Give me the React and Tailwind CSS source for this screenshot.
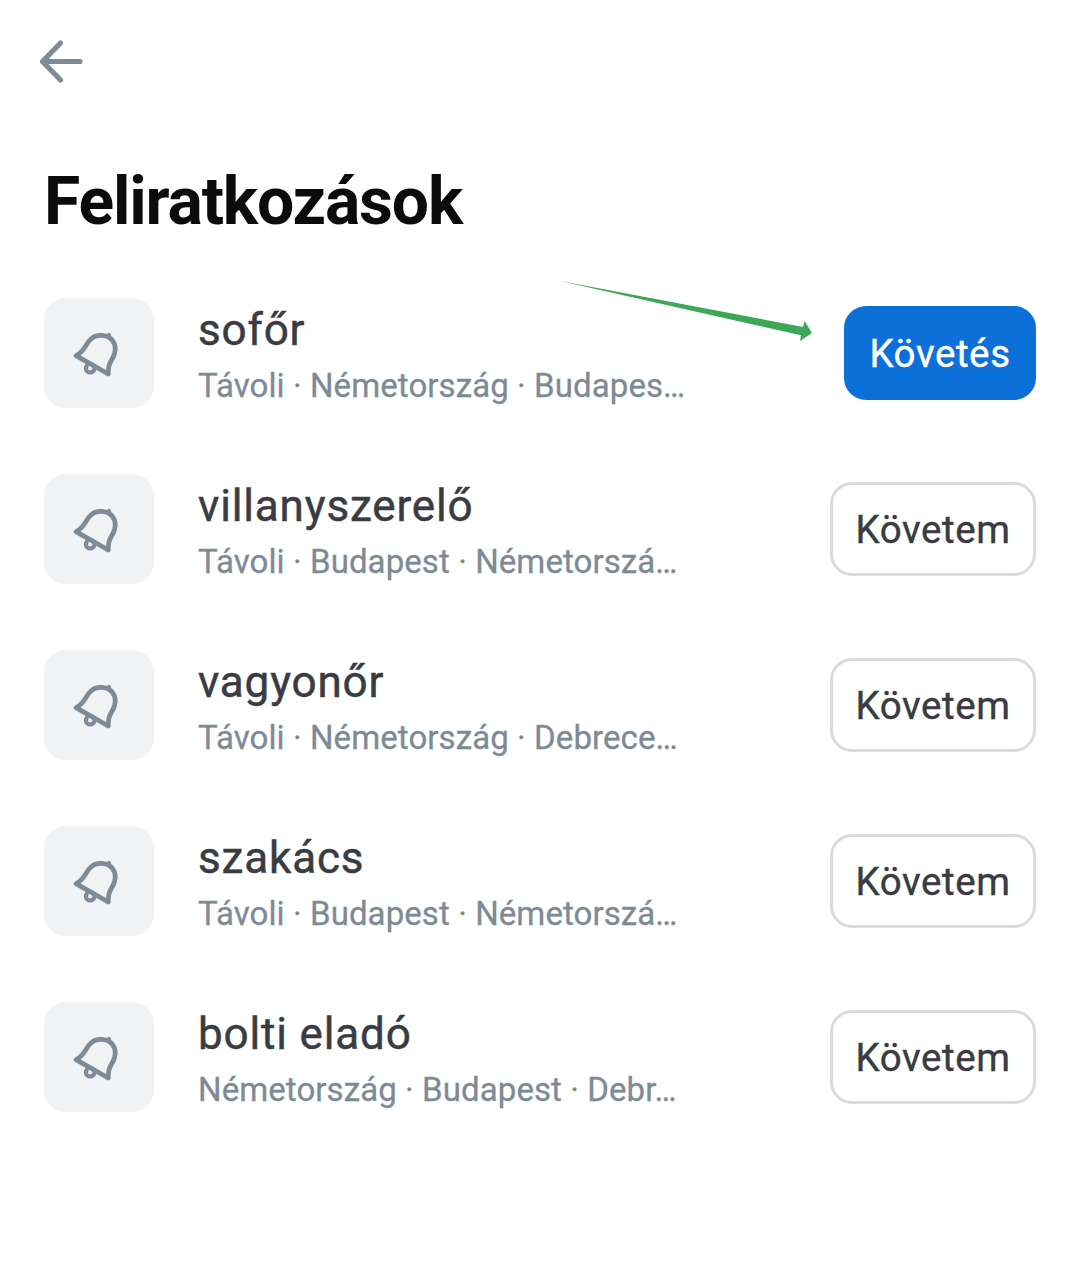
const rows = [
  { title: 'sofőr', places: 'Távoli · Németország · Budapes…', following: true },
  { title: 'villanyszerelő', places: 'Távoli · Budapest · Németorszá…' },
  { title: 'vagyonőr', places: 'Távoli · Németország · Debrece…' },
  { title: 'szakács', places: 'Távoli · Budapest · Németorszá…' },
  { title: 'bolti eladó', places: 'Németország · Budapest · Debr…' },
];

function BackIcon() {
  return (
    <svg className="block h-11 w-11" viewBox="0 0 44 44" fill="none" stroke="#7e8a95" strokeWidth="5.2" strokeLinecap="round" strokeLinejoin="round">
      <path d="M20.5 4 L2.5 22.5 L20.5 41 M2.5 22.5 H40" />
    </svg>
  );
}

function BellIcon() {
  return (
    <svg className="block h-[110px] w-[110px]" viewBox="0 0 110 110" fill="none" stroke="#7e8a95" strokeWidth="4.8" strokeLinejoin="round" strokeLinecap="round">
      <path d="M32 57.6 C43.5 52.8 41.5 38 56.5 37.4 C67.5 37 73.3 46.3 70.5 55.8 C68.3 63 63.3 64.8 64.3 76 Z" />
      <path d="M64.6 39 L65 37" strokeWidth="4.2" />
      <circle cx="46.2" cy="70.2" r="4.3" strokeWidth="4.2" />
    </svg>
  );
}

function Row({ title, places, following }) {
  return (
    <li className="flex h-[110px] items-center">
      <div className="shrink-0 rounded-[22px] bg-[#f1f2f4]">
        <BellIcon />
      </div>
      <div className="ml-11 min-w-0 flex-1 pt-1.5">
        <div className="text-[44px] leading-[60px] tracking-[0.85px] whitespace-nowrap text-[#393c42] [-webkit-text-stroke:0.5px]">{title}</div>
        <div className="text-[33px] leading-[52px] tracking-[0.09px] whitespace-nowrap text-[#7e8a95] [-webkit-text-stroke:0.3px]">{places}</div>
      </div>
      {following ? (
        <button className="h-[94px] w-48 rounded-[22px] bg-[#0c70d8] pt-0.5 text-[38.5px] leading-none tracking-[0.6px] text-white [-webkit-text-stroke:0.4px]">Követés</button>
      ) : (
        <button className="h-[94px] w-[206px] rounded-[22px] border-3 border-[#d9dbdd] pt-0.5 text-[38.5px] leading-none tracking-[0.6px] text-[#393c42] [-webkit-text-stroke:0.4px]">Követem</button>
      )}
    </li>
  );
}

export default function App() {
  return (
    <main className="relative h-[1283px] w-[1080px] overflow-hidden bg-white px-11 pt-[39px] font-['Roboto','Noto_Sans',sans-serif]">
      <div className="-ml-1">
        <BackIcon />
      </div>
      <h1 className="mt-20 text-[66px] leading-[78px] font-bold tracking-[-1.15px] text-[#0b0b0c]">Feliratkozások</h1>
      <ul className="mt-[57px] flex flex-col gap-[66px]">
        {rows.map((row) => (
          <Row key={row.title} {...row} />
        ))}
      </ul>
      <svg className="absolute top-[276px] left-[556px] h-[70px] w-[260px]" viewBox="556 276 260 70">
        <path d="M559 280.8 L803 327 L804.5 321 L812 333 L800 341 L801 335.3 Z" fill="#3ba757" />
      </svg>
    </main>
  );
}
